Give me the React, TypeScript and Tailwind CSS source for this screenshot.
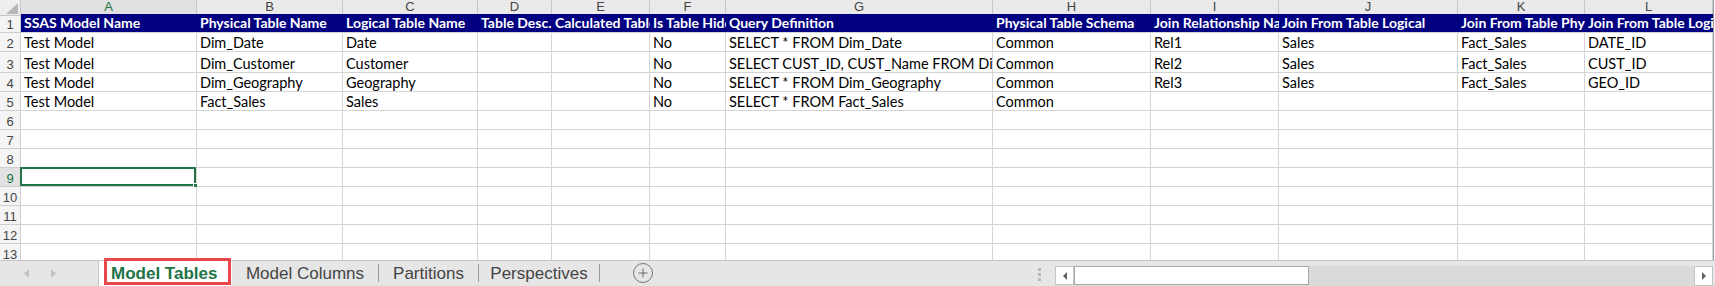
import { Plus } from 'lucide-react'

const cols = ['A', 'B', 'C', 'D', 'E', 'F', 'G', 'H', 'I', 'J', 'K', 'L']

const headers = [
  'SSAS Model Name',
  'Physical Table Name',
  'Logical Table Name',
  'Table Desc.',
  'Calculated Table Expression',
  'Is Table Hidden',
  'Query Definition',
  'Physical Table Schema',
  'Join Relationship Name',
  'Join From Table Logical',
  'Join From Table Physical',
  'Join From Table Logical Column',
]

const data = [
  ['Test Model', 'Dim_Date', 'Date', '', '', 'No', 'SELECT * FROM Dim_Date', 'Common', 'Rel1', 'Sales', 'Fact_Sales', 'DATE_ID'],
  ['Test Model', 'Dim_Customer', 'Customer', '', '', 'No', 'SELECT CUST_ID, CUST_Name FROM Dim_Customer', 'Common', 'Rel2', 'Sales', 'Fact_Sales', 'CUST_ID'],
  ['Test Model', 'Dim_Geography', 'Geography', '', '', 'No', 'SELECT * FROM Dim_Geography', 'Common', 'Rel3', 'Sales', 'Fact_Sales', 'GEO_ID'],
  ['Test Model', 'Fact_Sales', 'Sales', '', '', 'No', 'SELECT * FROM Fact_Sales', 'Common', '', '', '', ''],
]

const grid = 'grid grid-cols-[21px_176px_146px_135px_74px_98px_76px_267px_158px_128px_179px_127px_128px_1px_1fr]'
const cellFont = "font-['Lato',sans-serif] text-[14.5px] leading-none"
const headFont = "font-['Lato',sans-serif] text-[14px] leading-none"
const uiFont = "font-['Liberation_Sans',sans-serif]"

const RowHead = ({ n, active }: { n: number; active?: boolean }) => (
  <div
    className={`flex items-end justify-center pb-[1px] border-b border-r border-[#cfcfcf] ${uiFont} text-[13px] leading-none ${
      active ? 'bg-[#e1e1e1] text-[#217346]' : 'bg-[#f4f4f4] text-[#444]'
    }`}
  >
    {n}
  </div>
)

const SheetEdge = () => (
  <>
    <div className="bg-[#9a9a9a]" />
    <div className="bg-white" />
  </>
)

export default function App() {
  const emptyRows = [6, 7, 8, 9, 10, 11, 12, 13]
  const heights: Record<number, string> = { 2: 'h-[19px]', 3: 'h-[21px]', 4: 'h-[19px]', 5: 'h-[19px]' }

  return (
    <div className="w-[1715px] h-[286px] bg-white overflow-hidden flex flex-col">
      <div className="h-[260px] overflow-hidden">
        {/* column letters */}
        <div className={`${grid} h-[14px]`}>
          <div className="bg-[#eeeeee] border-r border-b border-[#c8c8c8] relative">
            <svg className="absolute right-[2px] bottom-[1px]" width="13" height="11" viewBox="0 0 13 11">
              <polygon points="13,0 13,11 1,11" fill="#b8b8b8" />
            </svg>
          </div>
          {cols.map((c) => (
            <div
              key={c}
              className={`flex items-end justify-center ${uiFont} text-[13px] leading-none border-r border-[#c8c8c8] ${
                c === 'A'
                  ? 'pb-[1px] bg-[#e1e1e1] text-[#217346] border-b-2 border-b-[#217346]'
                  : 'pb-[2px] bg-[#eaeaea] text-[#444] border-b border-b-[#ababab]'
              }`}
            >
              {c}
            </div>
          ))}
          <SheetEdge />
        </div>

        {/* header row */}
        <div className={`${grid} h-[19px]`}>
          <RowHead n={1} />
          {headers.map((h, i) => (
            <div
              key={i}
              className={`bg-[#000080] text-white font-bold ${headFont} flex items-end pb-[2px] pl-[3px] overflow-hidden whitespace-nowrap border-b border-[#d4d4d4]`}
            >
              {h}
            </div>
          ))}
          <SheetEdge />
        </div>

        {data.map((row, r) => (
          <div key={r} className={`${grid} ${heights[r + 2]}`}>
            <RowHead n={r + 2} />
            {row.map((v, i) => (
              <div
                key={i}
                className={`${cellFont} text-black flex items-end pb-[1px] pl-[3px] overflow-hidden whitespace-nowrap border-r border-b border-[#d4d4d4]`}
              >
                {v}
              </div>
            ))}
            <SheetEdge />
          </div>
        ))}

        {emptyRows.map((n) => (
          <div key={n} className={`${grid} h-[19px]`}>
            <RowHead n={n} active={n === 9} />
            {cols.map((c) => (
              <div key={c} className="relative border-r border-b border-[#d4d4d4]">
                {n === 9 && c === 'A' && (
                  <div className="absolute -left-[1px] -top-[1px] right-0 bottom-0 border-2 border-[#217346]">
                    <div className="absolute -right-[4px] -bottom-[4px] w-[5px] h-[5px] bg-[#217346] border border-white" />
                  </div>
                )}
              </div>
            ))}
            <SheetEdge />
          </div>
        ))}
      </div>

      {/* sheet tabs */}
      <div className={`flex-1 flex bg-[#e6e6e6] border-t border-[#c6c6c6] ${uiFont}`}>
        <div className="w-[99px] flex items-center gap-[22px] pl-[24px] border-r border-[#c6c6c6]">
          <svg width="5" height="9" viewBox="0 0 5 9"><polygon points="5,0 5,9 0,4.5" fill="#c4c4c4" /></svg>
          <svg width="5" height="9" viewBox="0 0 5 9"><polygon points="0,0 0,9 5,4.5" fill="#c4c4c4" /></svg>
        </div>

        <div className="relative w-[133px] bg-white flex items-center pl-[12px]">
          <span className="text-[17px] font-bold text-[#217346]">Model Tables</span>
          <div className="absolute left-[5px] right-[1px] -top-[3px] bottom-[1px] border-[3px] border-[#e8484b]" />
        </div>

        {['Model Columns', 'Partitions', 'Perspectives'].map((t, i) => (
          <div key={t} className={`flex items-center ${i === 0 ? 'w-[147px]' : i === 1 ? 'w-[100px]' : 'w-[121px]'}`}>
            <span className="flex-1 text-center text-[17px] text-[#444]">{t}</span>
            <div className="w-px h-[18px] bg-[#9a9a9a]" />
          </div>
        ))}

        <div className="ml-[33px] flex items-center">
          <div className="w-[20px] h-[20px] rounded-full border border-[#777] flex items-center justify-center">
            <Plus size={14} strokeWidth={1.5} color="#555" />
          </div>
        </div>

        <div className="flex-1" />

        <div className="w-[685px] flex items-end">
          <div className="h-full flex flex-col justify-center gap-[2px] ml-[8px] w-[3px] pt-[2px]">
            <div className="w-[3px] h-[3px] bg-[#b8b8b8]" />
            <div className="w-[3px] h-[3px] bg-[#b8b8b8]" />
            <div className="w-[3px] h-[3px] bg-[#b8b8b8]" />
          </div>
          <div className="flex-1 flex h-[20px] ml-[14px] mr-[2px] bg-[#dadada]">
            <div className="w-[19px] h-[19px] bg-white border border-[#c6c6c6] flex items-center justify-center">
              <svg width="4" height="8" viewBox="0 0 4 8"><polygon points="4,0 4,8 0,4" fill="#606060" /></svg>
            </div>
            <div className="w-[235px] h-[19px] bg-white border border-[#a8a8a8]" />
            <div className="flex-1" />
            <div className="w-[19px] h-[20px] bg-white border border-[#c6c6c6] flex items-center justify-center">
              <svg width="4" height="8" viewBox="0 0 4 8"><polygon points="0,0 0,8 4,4" fill="#606060" /></svg>
            </div>
          </div>
        </div>
      </div>
    </div>
  )
}
